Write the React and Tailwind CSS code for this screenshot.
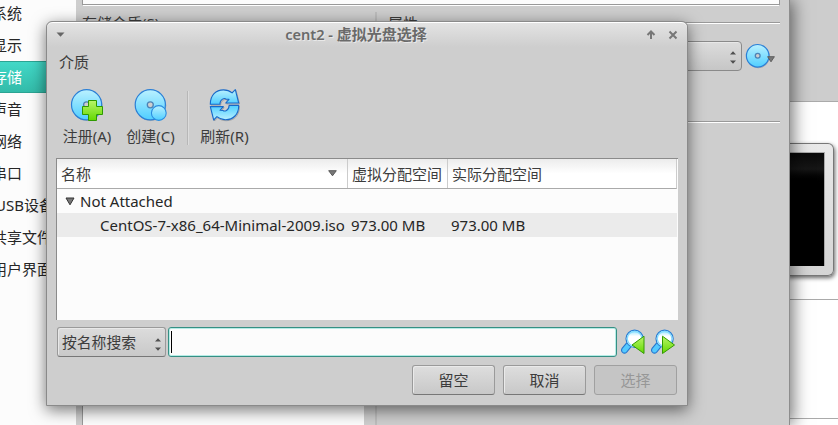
import React from 'react';

function Gradients() {
  return (
    <svg className="absolute h-0 w-0" aria-hidden="true">
      <defs>
        <linearGradient id="disc" x1="0" y1="0" x2="0" y2="1">
          <stop offset="0" stopColor="#baf1ff" />
          <stop offset="1" stopColor="#4fceff" />
        </linearGradient>
        <linearGradient id="leaf" x1="0" y1="0" x2="0" y2="1">
          <stop offset="0" stopColor="#b9f56a" />
          <stop offset="1" stopColor="#63d800" />
        </linearGradient>
        <linearGradient id="glass" x1="0" y1="0" x2="0" y2="1">
          <stop offset="0" stopColor="#8be3ff" />
          <stop offset="0.35" stopColor="#ffffff" />
          <stop offset="1" stopColor="#ffffff" />
        </linearGradient>
      </defs>
    </svg>
  );
}

function Disc({ cx, cy, r, hole }) {
  return (
    <g>
      <circle cx={cx + 0.5} cy={cy + 0.7} r={r} fill="none" stroke="#888" strokeOpacity="0.5" />
      <circle cx={cx} cy={cy} r={r} fill="url(#disc)" stroke="#2a7fd6" strokeWidth="1.2" />
      <circle cx={cx} cy={cy} r={hole} fill="#cecece" stroke="#4d83b5" strokeWidth="1.3" />
    </g>
  );
}

function RegisterIcon() {
  return (
    <svg width="34" height="34" viewBox="0 0 34 34">
      <Disc cx={16.6} cy={16.8} r={15.1} hole={3} />
      <path d="M18.500 12.500h8v6h6v8h-6v6h-8v-6h-6v-8h6z" fill="url(#leaf)" stroke="#2f9a00" strokeWidth="1" />
    </svg>
  );
}

function CreateIcon() {
  return (
    <svg width="34" height="34" viewBox="0 0 34 34">
      <Disc cx={16.3} cy={16.8} r={15.1} hole={3} />
      <circle cx="24.800" cy="25" r="7.400" fill="url(#disc)" stroke="#2a8ce0" strokeWidth="1.1" />
    </svg>
  );
}

function RefreshIcon() {
  const arrow = 'M2.800 16.200C2.800 7 8.300 1.900 16 1.900c3.500 0 6.200 1 8.600 3L27.800 1.600 31.200 15H18.200l3.300-3.700-3.200-.2C17.500 9.600 12.400 11 12.400 16.200z';
  return (
    <svg width="34" height="34" viewBox="0.5 0 34 34">
      <g transform="translate(0.8 1)" fill="none" stroke="#777" strokeOpacity="0.5">
        <path d={arrow} />
        <path d={arrow} transform="rotate(180 17 16.8)" />
      </g>
      <g fill="url(#disc)" stroke="#1769c9" strokeWidth="1.1" strokeLinejoin="round">
        <path d={arrow} />
        <path d={arrow} transform="rotate(180 17 16.8)" />
      </g>
    </svg>
  );
}

function SearchIcon({ forward }) {
  return (
    <svg width="26" height="26" viewBox="0 0 26 26">
      <path d="M8 12.400 12 16.600 6.500 23.300Q4.500 25 2.500 23.300Q0.700 21.300 2.300 19.200z" fill="#54caff" stroke="#2577cf" strokeWidth="1.1" />
      <circle cx="14.600" cy="9.800" r="8.600" fill="url(#glass)" stroke="#2b7fd4" strokeWidth="1.2" />
      <circle cx="14.600" cy="9.800" r="7.300" fill="none" stroke="#84dcff" strokeWidth="1.300" />
      <path d={forward ? 'M12.500 7.200V24.500L24.500 16z' : 'M24 7.200V24.500L12 16z'} fill="url(#leaf)" stroke="#339b00" strokeLinejoin="round" />
    </svg>
  );
}

function DownArrow({ size = 9 }) {
  return (
    <svg width={size} height="7" viewBox="0 0 9 7" preserveAspectRatio="none">
      <path d="M.7.7h7.600L4.500 5.800z" fill="#777" stroke="#5a5a5a" />
    </svg>
  );
}

function Spinner() {
  return (
    <svg width="6" height="13" viewBox="0 0 6 13">
      <path d="M0 3.500h6L3 0.300zM0 9.500h6L3 12.700z" fill="#505050" />
    </svg>
  );
}

function Monitor() {
  return (
    <div className="mt-[41px] h-[133px] w-[47px] rounded-r-md border border-l-0 border-[#777] bg-linear-to-b from-[#e9e9e9] to-[#d5d5d5] pt-[8px] shadow-[1px_2px_4px_rgba(0,0,0,0.6)]">
      <div className="h-[114px] w-[38px] border-t border-r border-[#aaa] bg-black">
        <div className="h-[32px] bg-linear-to-b from-[#090909] via-[#161616] to-black" />
      </div>
    </div>
  );
}

function ManagerWindow() {
  return (
    <div className="absolute top-0 left-[787px] h-[425px] w-[51px] overflow-hidden bg-white">
      <div className="h-[102px] border-b border-[#aaa] bg-[#cdcdcd]" />
      <Monitor />
      <div className="mt-[23px] h-[120px] border-y border-[#aaa]" />
    </div>
  );
}

const CATEGORIES = ['系统', '显示', '存储', '声音', '网络', '串口', 'USB设备', '共享文件夹', '用户界面'];

function SettingsWindow() {
  return (
    <div className="absolute top-0 left-0 flex h-[425px] w-[790px] border-r border-[#8d8d8d] bg-[#cecece] shadow-[3px_0_16px_rgba(0,0,0,0.55)]">
      <div className="w-[76px] shrink-0 overflow-hidden bg-[#fcfcfc]">
        <ul className="-mt-[3px]">
          {CATEGORIES.map((name) => (
            <li
              key={name}
              className={
                name === '存储'
                  ? 'h-8 border-y border-t-[#2ba493] border-b-[#2ba493] bg-linear-to-b from-[#42d8c7] to-[#33bba9] leading-[31px] whitespace-nowrap text-white'
                  : 'h-8 leading-[33px] whitespace-nowrap text-[#262626]'
              }
            >
              <span className={name === 'USB设备' ? '-ml-[5px]' : '-ml-[8px]'}>{name}</span>
            </li>
          ))}
        </ul>
      </div>
      <div className="flex flex-1 flex-col pr-[9px] pl-[6px]">
        <div className="h-[6px] w-[698px] shrink-0 border-x border-b border-[#999] border-b-white bg-[#fcfcfc]">
          <div className="h-[5px] border-b border-[#999]" />
        </div>
        <div className="flex flex-1">
          <div className="flex w-[282px] flex-col pt-[5px]">
            <span className="leading-[24px]">存储介质(S)</span>
            <div className="mt-[8px] flex-1 border-l border-[#999] bg-[#fcfcfc]" />
          </div>
          <div className="mt-[6px] ml-[11px] w-[2px] bg-[#bdbdbd]" />
          <div className="ml-[11px] flex-1">
            <div className="flex h-[35px] pt-[5px]">
              <span className="leading-[24px]">属性</span>
              <div className="mt-[11px] ml-[8px] h-[2px] flex-1 border-t border-[#999] bg-white" />
            </div>
            <div className="flex h-[30px] items-center">
              <div className="flex h-[30px] w-[354px] items-center justify-end rounded-sm border border-[#8a8a8a] bg-linear-to-b from-[#dcdcdc] to-[#c6c6c6] pt-[3px] pr-[5px] shadow-[inset_1px_1px_#e8e8e8]">
                <Spinner />
              </div>
              <div className="ml-[3px] flex items-center">
                <svg width="26" height="26" viewBox="0 0 26 26">
                  <Disc cx={12.7} cy={12.8} r={11.3} hole={2.4} />
                </svg>
                <span className="-ml-[4px] flex pt-[6px]"><DownArrow size={8} /></span>
              </div>
            </div>
            <div className="mt-[50px] h-[2px] border-t border-[#999] bg-white" />
          </div>
        </div>
      </div>
    </div>
  );
}

function TitleBar() {
  return (
    <div className="flex h-[25px] items-center rounded-t-md border-t border-white bg-linear-to-b from-[#e3e3e3] to-[#cecece] px-[9px]">
      <svg width="9" height="6" viewBox="0 0 9 6"><path d="M.5 0.500h8l-4 4.300z" fill="#666" /></svg>
      <h1 className="-mt-[3px] flex-1 pl-[1px] text-center text-[14.6px] leading-[22px] font-semibold text-[#6a6a6a] [text-shadow:1px_1px_#e8e8e8]">
        cent2 - <span className="text-[15px] font-bold">虚拟光盘选择</span>
      </h1>
      <svg width="32" height="10" viewBox="0 0 32 10" fill="none" stroke="#777" strokeWidth="2">
        <path d="M5 9V2M1.500 5 5 1.500 8.500 5" />
        <path d="m23.500 1.500 7 7m0-7-7 7" />
      </svg>
    </div>
  );
}

function ToolButton({ icon, label, className }) {
  return (
    <div className={'flex flex-col items-center pt-[1px] ' + className}>
      {icon}
      <span className="mt-[2px] leading-[24px] whitespace-nowrap">{label}</span>
    </div>
  );
}

function MediaTable() {
  return (
    <div className="mx-[9px] mt-[10px] h-[162px] border-t border-l border-[#8b8b8b] bg-[#fcfcfc]">
      <div className="mr-[1px] flex h-[30px] border-r border-b border-r-[#ccc] border-b-[#aaa] bg-linear-to-b from-[#ececec] via-white via-50% to-white leading-[31px]">
        <div className="flex w-[291px] items-center justify-between border-r border-[#ccc] pr-[10px] pl-[4px]">
          <span className="pt-[2px]">名称</span>
          <DownArrow />
        </div>
        <div className="w-[100px] border-r border-[#ccc] pl-[4px]">虚拟分配空间</div>
        <div className="pl-[4px]">实际分配空间</div>
      </div>
      <div className="flex h-6 items-center pl-[8px] text-[#262626]">
        <svg width="10" height="9" viewBox="0 0 10 9"><path d="M1 1h8L5 7.800z" fill="#777" stroke="#333" /></svg>
        <span className="ml-[5px]">Not Attached</span>
      </div>
      <div className="mr-[1px] flex h-6 items-center bg-[#ebebeb] text-[#262626]">
        <span className="w-[294px] pl-[43px] whitespace-nowrap">CentOS-7-x86_64-Minimal-2009.iso</span>
        <span className="w-[100px]">973.00 MB</span>
        <span>973.00 MB</span>
      </div>
    </div>
  );
}

function PushButton({ label, disabled }) {
  return (
    <button
      disabled={disabled}
      className={
        disabled
          ? 'h-[30px] w-[83px] rounded-[3px] border border-[#a0a0a0] bg-[#c5c5c5] text-[#979797]'
          : 'h-[30px] w-[83px] rounded-[3px] border border-[#9a9a9a] border-b-[#777] bg-linear-to-b from-[#dedede] to-[#c8c8c8] shadow-[inset_1px_1px_#eaeaea]'
      }
    >
      {label}
    </button>
  );
}

function MediumSelector() {
  return (
    <div className="absolute top-[21px] left-[46px] flex h-[385px] w-[642px] flex-col rounded-t-md border border-[#8a8a8a] bg-[#cecece] shadow-[0_4px_16px_rgba(0,0,0,0.55)]">
      <TitleBar />
      <div className="h-[40px] pt-[2px] pl-[12px] leading-[26px]">介质</div>
      <div className="flex h-[61px] pl-[8px]">
        <ToolButton className="w-[64px]" icon={<RegisterIcon />} label="注册(A)" />
        <ToolButton className="w-[63px]" icon={<CreateIcon />} label="创建(C)" />
        <div className="mt-[4px] ml-[5px] h-[54px] w-[2px] border-l border-[#b7b7b7] bg-[#dcdcdc]" />
        <ToolButton className="ml-[2px] w-[67px]" icon={<RefreshIcon />} label="刷新(R)" />
      </div>
      <MediaTable />
      <div className="mt-[7px] flex h-[30px] items-center pl-[10px]">
        <div className="flex h-[30px] w-[109px] items-center justify-between rounded-[3px] border border-[#9a9a9a] border-b-[#777] bg-linear-to-b from-[#dcdcdc] to-[#c9c9c9] pr-[4px] pl-[4px] shadow-[inset_1px_1px_#e8e8e8]">
          <span className="text-[14.800px]">按名称搜索</span>
          <span className="pt-[4px]"><Spinner /></span>
        </div>
        <div className="ml-[2px] flex h-[30px] w-[449px] items-center rounded-[3px] border border-[#368f84] bg-[#fcfcfc] pl-[2px] shadow-[inset_0_0_0_1px_#b5ece6]">
          <span className="h-[22px] w-px bg-black" />
        </div>
        <div className="ml-[3px] flex gap-[4px]">
          <SearchIcon />
          <SearchIcon forward />
        </div>
      </div>
      <div className="mt-[8px] flex justify-end gap-[8px] pr-[10px]">
        <PushButton label="留空" />
        <PushButton label="取消" />
        <PushButton label="选择" disabled />
      </div>
    </div>
  );
}

export default function App() {
  return (
    <div className="relative h-[425px] w-[838px] overflow-hidden bg-white font-['Noto_Sans','Noto_Sans_CJK_SC',sans-serif] text-[15px] text-[#3c3c3c]">
      <Gradients />
      <ManagerWindow />
      <SettingsWindow />
      <MediumSelector />
    </div>
  );
}
